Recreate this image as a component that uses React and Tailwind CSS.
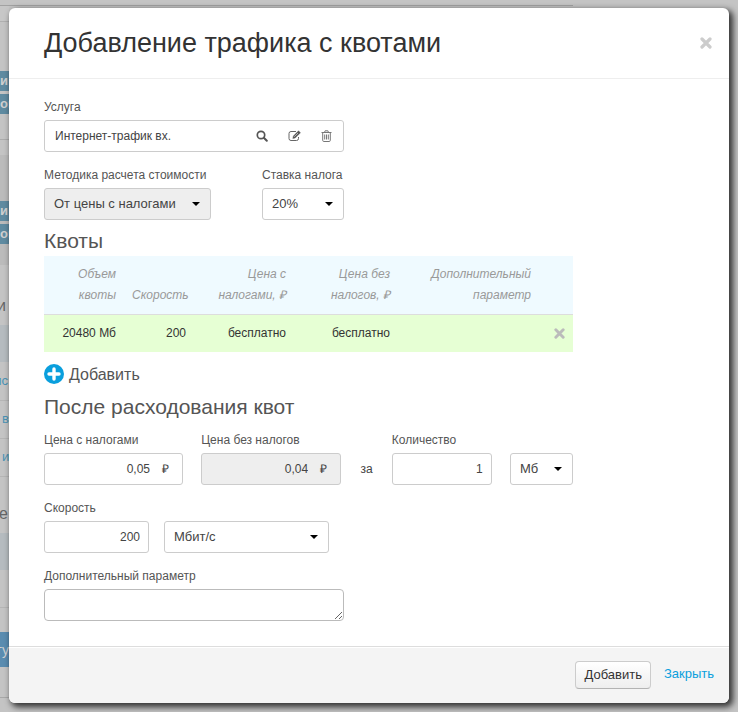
import { useState } from "react";

const quotas = [
  { id: 1, volume: "20480 Мб", speed: "200", withTax: "бесплатно", withoutTax: "бесплатно", extra: "" },
];

const control =
  "h-8 rounded-[3px] border border-[#ccc] bg-white text-[#444] outline-none focus:border-[#0a9fdd]";

function Label({ htmlFor, children }) {
  return (
    <label htmlFor={htmlFor} className="mb-1 block text-xs leading-[18px] text-[#555]">
      {children}
    </label>
  );
}

function Select({ id, options, disabled, label }) {
  return (
    <div className="relative">
      <select
        id={id}
        aria-label={label}
        disabled={disabled}
        className={`${control} w-full appearance-none pl-[9px] pr-6 text-[13px] disabled:bg-[#eee] disabled:opacity-100`}
      >
        {options.map((option) => (
          <option key={option}>{option}</option>
        ))}
      </select>
      <svg viewBox="0 0 8 4" className="pointer-events-none absolute right-[11px] top-[14px] h-1 w-2">
        <path d="M0 0h8L4 4z" fill="#000" />
      </svg>
    </div>
  );
}

function PriceInput({ id, value, onChange, disabled }) {
  return (
    <div className="relative">
      <input
        id={id}
        type="text"
        value={value}
        onChange={onChange}
        disabled={disabled}
        className={`${control} w-full pr-8 text-right text-xs disabled:bg-[#eee]`}
      />
      <span className="absolute right-[14px] top-2 text-xs leading-4 text-[#444]">₽</span>
    </div>
  );
}

function SearchIcon() {
  return (
    <svg viewBox="0 0 12 12" className="size-3" fill="none" stroke="#555">
      <circle cx="5" cy="5" r="3.7" strokeWidth="1.7" />
      <path d="M7.8 7.8l3 3" strokeWidth="2" strokeLinecap="round" />
    </svg>
  );
}

function EditIcon() {
  return (
    <svg viewBox="0 0 13 12" className="h-3 w-[13px]" fill="none" stroke="#666">
      <path d="M8 1.500H3a2 2 0 0 0-2 2V8.500a2 2 0 0 0 2 2h5.500a2 2 0 0 0 2-2V7" />
      <path d="M4.800 8.500l.5-2.400L10.500 .8l2 1.900-5.300 5.300z" fill="#555" strokeWidth=".4" />
      <path d="M6.200 6.800L10 3" stroke="#ddd" strokeWidth=".7" />
    </svg>
  );
}

function TrashIcon() {
  return (
    <svg viewBox="0 0 11 12" className="h-3 w-[11px]" fill="none" stroke="#777">
      <path d="M.5 2.500h10M3.500 2.500l.6-1.700h2.800l.6 1.700M1.700 2.500v7.800q0 1.200 1.100 1.200h5.400q1.100 0 1.100-1.200V2.500M3.700 4.500v5M5.500 4.500v5M7.300 4.500v5" />
    </svg>
  );
}

function CrossIcon({ className, color }) {
  return (
    <svg viewBox="0 0 12 12" className={className}>
      <path d="M2 2l8 8M10 2l-8 8" stroke={color} strokeWidth="3.2" strokeLinecap="round" />
    </svg>
  );
}

// Dimmed page left under the dialog
function Backdrop() {
  return (
    <div aria-hidden="true" className="absolute inset-0 overflow-hidden bg-[#c4c4c4]">
      <div className="h-[6px] w-[573px] border-b border-[#a2a2a2]" />
      <div className="flex w-[9px] flex-col text-sm text-[#d0d0d0] *:w-full *:shrink-0 *:whitespace-nowrap">
        <div className="h-4 border-b border-[#b0b0b0] bg-[#c7c7c7]" />
        <div className="mt-[49px] flex h-5 items-center justify-end bg-[#5f8ba1] pr-[1px] text-[13px] font-bold">и</div>
        <div className="mt-[3px] flex h-5 items-center bg-[#5f8ba1] text-[13px] font-bold">ои</div>
        <div className="h-[26px] border-b border-[#acacac]" />
        <div className="mt-[15px] h-[110px] bg-[#bbb] pt-[46px]">
          <div className="flex h-5 items-center justify-end bg-[#5f8ba1] pr-[1px] text-[13px] font-bold">и</div>
          <div className="mt-[3px] flex h-5 items-center bg-[#5f8ba1] text-[13px] font-bold">ои</div>
        </div>
        <div className="flex h-[60px] items-center justify-end pr-[3px] pt-[22px] text-base text-[#666]">и</div>
        <div className="h-[37px] bg-[#b5bbbf]" />
        <div className="flex h-[39px] items-center justify-end border-b border-[#b5b5b5] pr-[1px] text-[13px] text-[#4a93b5]">ис</div>
        <div className="flex h-[38px] items-center border-b border-[#b5b5b5] pl-[2px] text-[13px] text-[#4a93b5]">в</div>
        <div className="flex h-[38px] items-center border-b border-[#b5b5b5] pl-[2px] text-[13px] text-[#4a93b5]">и</div>
        <div className="flex h-14 items-center justify-end pr-[1px] pt-[18px] text-base text-[#666]">е</div>
        <div className="h-[37px] bg-[#b5bbbf]" />
        <div className="h-[38px] border-b border-[#b5b5b5]" />
        <div className="mt-6 flex h-[35px] items-center justify-end bg-[#5a8cb0]">ту</div>
        <div className="h-[31px] border-b border-[#a8a8a8]" />
      </div>
    </div>
  );
}

export default function App() {
  const [rows, setRows] = useState(quotas);
  const [price, setPrice] = useState("0,05");

  const removeRow = (id) => {
    setRows(rows.filter((row) => row.id !== id));
  };

  return (
    <div className="relative min-h-screen overflow-hidden pt-2 font-['Liberation_Sans',Arial,sans-serif] text-[#444]">
      <Backdrop />
      <div
        role="dialog"
        aria-labelledby="title"
        className="relative mx-[9px] mb-[9px] overflow-hidden rounded-md bg-white shadow-[3px_3px_6px_1px_rgba(0,0,0,0.75)]"
      >
        <header className="flex items-center justify-between border-b border-[#eee] py-[17px] pl-[35px] pr-[17px]">
          <h1 id="title" className="text-[27px] leading-9 text-[#333]">
            Добавление трафика с квотами
          </h1>
          <button type="button" aria-label="Закрыть окно">
            <CrossIcon className="size-3" color="#ccc" />
          </button>
        </header>

        <form className="px-[35px] pb-[25px] pt-[19px]" onSubmit={(e) => e.preventDefault()}>
          <Label htmlFor="service">Услуга</Label>
          <div className="mb-[14px] flex h-8 w-[300px] items-center rounded-[3px] border border-[#ccc] pr-[11px]">
            <input
              id="service"
              type="text"
              defaultValue="Интернет-трафик вх."
              className="min-w-0 flex-1 pl-[10px] text-xs outline-none"
            />
            <div className="flex items-center gap-5">
              <button type="button" aria-label="Найти"><SearchIcon /></button>
              <button type="button" aria-label="Изменить"><EditIcon /></button>
              <button type="button" aria-label="Удалить"><TrashIcon /></button>
            </div>
          </div>

          <div className="flex w-[300px] justify-between">
            <div className="w-[167px]">
              <Label htmlFor="method">Методика расчета стоимости</Label>
              <Select id="method" options={["От цены с налогами"]} disabled />
            </div>
            <div className="w-[82px]">
              <Label htmlFor="tax">Ставка налога</Label>
              <Select id="tax" options={["20%", "10%", "0%"]} />
            </div>
          </div>

          <h2 className="pb-[3px] pt-[9px] text-[21px] leading-6 text-[#555]">Квоты</h2>
          <table className="w-[529px] table-fixed text-right text-xs">
            <colgroup>
              <col className="w-20" />
              <col className="w-[70px]" />
              <col className="w-[100px]" />
              <col className="w-[104px]" />
              <col className="w-[141px]" />
              <col className="w-[34px]" />
            </colgroup>
            <thead>
              <tr className="border-b border-[#ddd] bg-[#effaff] align-bottom italic leading-[21px] text-[#999] *:px-2 *:pb-2 *:pt-2 *:font-normal">
                <th>Объем квоты</th>
                <th>Скорость</th>
                <th>Цена с налогами, ₽</th>
                <th>Цена без налогов, ₽</th>
                <th>Дополнительный параметр</th>
                <th />
              </tr>
            </thead>
            <tbody>
              {rows.map((row) => (
                <tr key={row.id} className="h-[37px] bg-[#e6ffd4] text-[#333] *:px-2">
                  <td>{row.volume}</td>
                  <td>{row.speed}</td>
                  <td>{row.withTax}</td>
                  <td>{row.withoutTax}</td>
                  <td>{row.extra}</td>
                  <td>
                    <button type="button" aria-label="Удалить квоту" onClick={() => removeRow(row.id)} className="ml-auto block">
                      <CrossIcon className="size-[11px]" color="#bbb" />
                    </button>
                  </td>
                </tr>
              ))}
            </tbody>
          </table>

          <button type="button" className="mt-3 flex items-center gap-[5px] text-base leading-[21px] text-[#555]">
            <svg viewBox="0 0 20 20" className="size-5">
              <circle cx="10" cy="10" r="10" fill="#0a9fdd" />
              <path d="M10 5v10M5 10h10" stroke="#fff" strokeWidth="3.4" strokeLinecap="round" />
            </svg>
            Добавить
          </button>

          <h2 className="pb-3 pt-[10px] text-[21px] leading-6 text-[#555]">После расходования квот</h2>
          <div className="mb-[14px] flex w-[529px] items-end justify-between">
            <div className="w-[139px]">
              <Label htmlFor="price">Цена с налогами</Label>
              <PriceInput id="price" value={price} onChange={(e) => setPrice(e.target.value)} />
            </div>
            <div className="w-[140px]">
              <Label htmlFor="net">Цена без налогов</Label>
              <PriceInput id="net" value="0,04" disabled />
            </div>
            <span className="px-[1px] text-xs leading-8">за</span>
            <div className="w-[100px]">
              <Label htmlFor="count">Количество</Label>
              <input id="count" type="text" defaultValue="1" className={`${control} w-full px-2 text-right text-xs`} />
            </div>
            <div className="w-[63px]">
              <Select label="Единица объема" options={["Мб", "Гб"]} />
            </div>
          </div>

          <div className="mb-[14px] flex items-end gap-[15px]">
            <div className="w-[105px]">
              <Label htmlFor="speed">Скорость</Label>
              <input id="speed" type="text" defaultValue="200" className={`${control} w-full px-2 text-right text-xs`} />
            </div>
            <div className="w-[165px]">
              <Select label="Единица скорости" options={["Мбит/с", "Кбит/с"]} />
            </div>
          </div>

          <Label htmlFor="extra">Дополнительный параметр</Label>
          <textarea
            id="extra"
            className="block h-8 w-[300px] rounded border border-[#bbb] px-2 py-1 text-xs text-[#444] outline-none focus:border-[#0a9fdd]"
          />
        </form>

        <footer className="flex items-start justify-end gap-[13px] border-t border-[#ddd] bg-[#f4f4f4] pb-[14px] pl-[35px] pr-[15px] pt-[14px] shadow-[inset_0_1px_0_#fff]">
          <button
            type="button"
            className="h-7 rounded border border-[#ccc] border-b-[#b3b3b3] bg-linear-to-b from-white to-[#eee] px-2 text-[13px] text-[#333]"
          >
            Добавить
          </button>
          <a href="#close" className="text-[13px] leading-[26px] text-[#0a9fdd]">
            Закрыть
          </a>
        </footer>
      </div>
    </div>
  );
}
